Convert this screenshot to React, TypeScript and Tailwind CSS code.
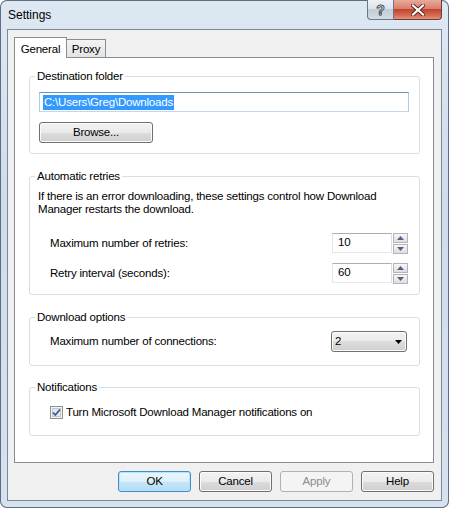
import React from "react";

const FONT = "font-['Liberation_Sans',Arial,sans-serif] text-[11.5px] tracking-[-0.2px] text-black";

function Group({
  title,
  className,
  children,
}: {
  title: string;
  className: string;
  children?: React.ReactNode;
}) {
  return (
    <div className={"relative w-[391px] rounded-[3px] border border-[#d5dfe5] " + className}>
      <span className="absolute left-[5px] top-[-8px] bg-white px-[2px] leading-[15px]">{title}</span>
      {children}
    </div>
  );
}

function Btn({ label, kind }: { label: string; kind: "normal" | "default" | "disabled" }) {
  const base =
    "flex h-[21px] w-[73px] items-center justify-center rounded-[3px] border leading-none ";
  if (kind === "default")
    return (
      <div
        className={
          base +
          "border-[#3c8fc8] bg-[linear-gradient(#ecf6fc_0%,#dcf0fb_50%,#c5e6f8_50%,#b4dcf3_100%)] shadow-[inset_0_0_0_1px_#b8e2f7]"
        }
      >
        {label}
      </div>
    );
  if (kind === "disabled")
    return (
      <div className={base + "border-[#adb2b5] bg-[#f4f4f4] text-[#8c8c8c]"}>{label}</div>
    );
  return (
    <div
      className={
        base +
        "border-[#707070] bg-[linear-gradient(#f2f2f2_0%,#ebebeb_50%,#dddddd_50%,#cfcfcf_100%)] shadow-[inset_0_0_0_1px_#fbfbfb]"
      }
    >
      {label}
    </div>
  );
}

function Spin({ value }: { value: string }) {
  return (
    <div className="flex items-start">
      <div className="flex h-[20px] w-[60px] items-center border border-[#abadb3] border-l-[#e2e3ea] border-b-[#e3e9ef] border-r-[#dbdfe6] bg-white pl-[5px]">
        {value}
      </div>
      <div className="ml-px flex flex-col gap-[1px]">
        <div className="flex h-[10px] w-[15px] items-center justify-center border border-[#b4b4b4] bg-[linear-gradient(#f6f6f6,#dedede)]">
          <svg width="7" height="4" viewBox="0 0 7 4">
            <path d="M3.5 0 L7 4 L0 4 Z" fill="#4d6185" />
          </svg>
        </div>
        <div className="flex h-[10px] w-[15px] items-center justify-center border border-[#b4b4b4] bg-[linear-gradient(#f6f6f6,#dedede)]">
          <svg width="7" height="4" viewBox="0 0 7 4">
            <path d="M0 0 L7 0 L3.5 4 Z" fill="#4d6185" />
          </svg>
        </div>
      </div>
    </div>
  );
}

export default function App() {
  return (
    <div
      className={
        FONT +
        " flex h-[508px] w-[449px] flex-col overflow-hidden rounded-[7px] bg-[linear-gradient(180deg,#dde8f3_0%,#cfdcea_40%,#d6e2ee_100%)] shadow-[inset_0_0_0_1px_#5e6e80]"
      }
    >
      {/* Title bar */}
      <div className="flex h-[29px] shrink-0 items-start">
        <div className="pl-[8px] pt-[8px] text-[12px] leading-[15px] tracking-normal">Settings</div>
        <div className="ml-auto mr-[7px] flex">
          <div className="flex h-[20px] w-[27px] items-center justify-center rounded-bl-[4px] border border-t-0 border-[#6b7785] bg-[linear-gradient(#eef2f6_0%,#dce3ea_45%,#c3ccd5_50%,#d3dbe3_100%)]">
            <span className="text-[14px] font-bold leading-none text-white [-webkit-text-stroke:1px_#4a5562]">
              ?
            </span>
          </div>
          <div className="flex h-[20px] w-[48px] items-center justify-center rounded-br-[4px] border border-l-0 border-t-0 border-[#6e3a33] bg-[linear-gradient(#e9a99a_0%,#d8806c_45%,#c4432c_50%,#d26a52_80%,#e0937c_100%)]">
            <svg width="14" height="12" viewBox="0 0 14 12">
              <path
                d="M2 1.5 L12 10.5 M12 1.5 L2 10.5"
                stroke="#5a2419"
                strokeWidth="4"
                strokeLinecap="square"
              />
              <path
                d="M2 1.5 L12 10.5 M12 1.5 L2 10.5"
                stroke="#ffffff"
                strokeWidth="2.2"
                strokeLinecap="square"
              />
            </svg>
          </div>
        </div>
      </div>

      {/* Client area */}
      <div className="mx-[7px] flex h-[472px] shrink-0 flex-col border border-[#7c8a98] bg-[#f0f0f0]">
        {/* Tabs */}
        <div className="ml-[6px] mt-[7px] flex h-[20px] items-end">
          <div className="relative z-10 -mb-px flex h-[21px] w-[53px] items-start justify-center border border-b-0 border-[#898c95] bg-white pt-[4px] leading-[14px]">
            General
          </div>
          <div className="-ml-px flex h-[18px] w-[40px] items-start justify-center border border-b-0 border-[#898c95] bg-[linear-gradient(#f3f3f3,#e3e3e3)] pt-[2px] leading-[14px]">
            Proxy
          </div>
        </div>

        {/* Panel */}
        <div className="ml-[6px] flex h-[406px] w-[420px] flex-col border border-[#898c95] bg-white">
          <Group title="Destination folder" className="ml-[14px] mt-[18px] h-[78px]">
            <div className="pl-[9px] pt-[15px]">
              <div className="flex h-[20px] w-[370px] items-center border border-[#6f93b8] border-l-[#b3cbe2] border-r-[#b3cbe2] border-b-[#c5d8ea] bg-white pl-[3px]">
                <span className="bg-[#3399ff] px-px leading-[15px] text-white">
                  C:\Users\Greg\Downloads
                </span>
              </div>
              <div className="mt-[10px] flex h-[21px] w-[114px] items-center justify-center rounded-[3px] border border-[#707070] bg-[linear-gradient(#f2f2f2_0%,#ebebeb_50%,#dddddd_50%,#cfcfcf_100%)] leading-none shadow-[inset_0_0_0_1px_#fbfbfb]">
                Browse...
              </div>
            </div>
          </Group>

          <Group title="Automatic retries" className="ml-[14px] mt-[22px] h-[119px]">
            <div className="pl-[8px] pt-[13px] leading-[13px]">
              If there is an error downloading, these settings control how Download
              <br />
              Manager restarts the download.
            </div>
            <div className="mt-[17px] flex flex-col gap-[9px] pl-[20px] pr-[11px]">
              <div className="flex items-center justify-between">
                <span>Maximum number of retries:</span>
                <Spin value="10" />
              </div>
              <div className="flex items-center justify-between">
                <span>Retry interval (seconds):</span>
                <Spin value="60" />
              </div>
            </div>
          </Group>

          <Group title="Download options" className="ml-[14px] mt-[22px] h-[49px]">
            <div className="flex items-center justify-between pl-[20px] pr-[12px] pt-[13px]">
              <span>Maximum number of connections:</span>
              <div className="flex h-[21px] w-[76px] items-center justify-between rounded-[3px] border border-[#707070] bg-[linear-gradient(#f2f2f2_0%,#ebebeb_50%,#dddddd_50%,#cfcfcf_100%)] pl-[3px] pr-[4px] shadow-[inset_0_0_0_1px_#fbfbfb]">
                <span className="leading-none">2</span>
                <svg width="7" height="4" viewBox="0 0 7 4">
                  <path d="M0 0 L7 0 L3.5 4 Z" fill="#000" />
                </svg>
              </div>
            </div>
          </Group>

          <Group title="Notifications" className="ml-[14px] mt-[21px] h-[49px]">
            <div className="flex items-center gap-[3px] pl-[20px] pt-[17px]">
              <svg width="13" height="13" viewBox="0 0 13 13">
                <rect x="0.5" y="0.5" width="12" height="12" fill="#f4f4f4" stroke="#8e8f8f" />
                <rect x="2.5" y="2.5" width="8" height="8" fill="#e4e8ee" stroke="#c2c8d0" />
                <path
                  d="M3 6.5 L5.3 9 L10 3.5"
                  fill="none"
                  stroke="#3c5a94"
                  strokeWidth="1.8"
                />
              </svg>
              <span className="leading-[15px]">Turn Microsoft Download Manager notifications on</span>
            </div>
          </Group>
        </div>

        {/* Buttons */}
        <div className="ml-[6px] mt-[8px] flex w-[420px] justify-end gap-[8px]">
          <Btn label="OK" kind="default" />
          <Btn label="Cancel" kind="normal" />
          <Btn label="Apply" kind="disabled" />
          <Btn label="Help" kind="normal" />
        </div>
      </div>
    </div>
  );
}
